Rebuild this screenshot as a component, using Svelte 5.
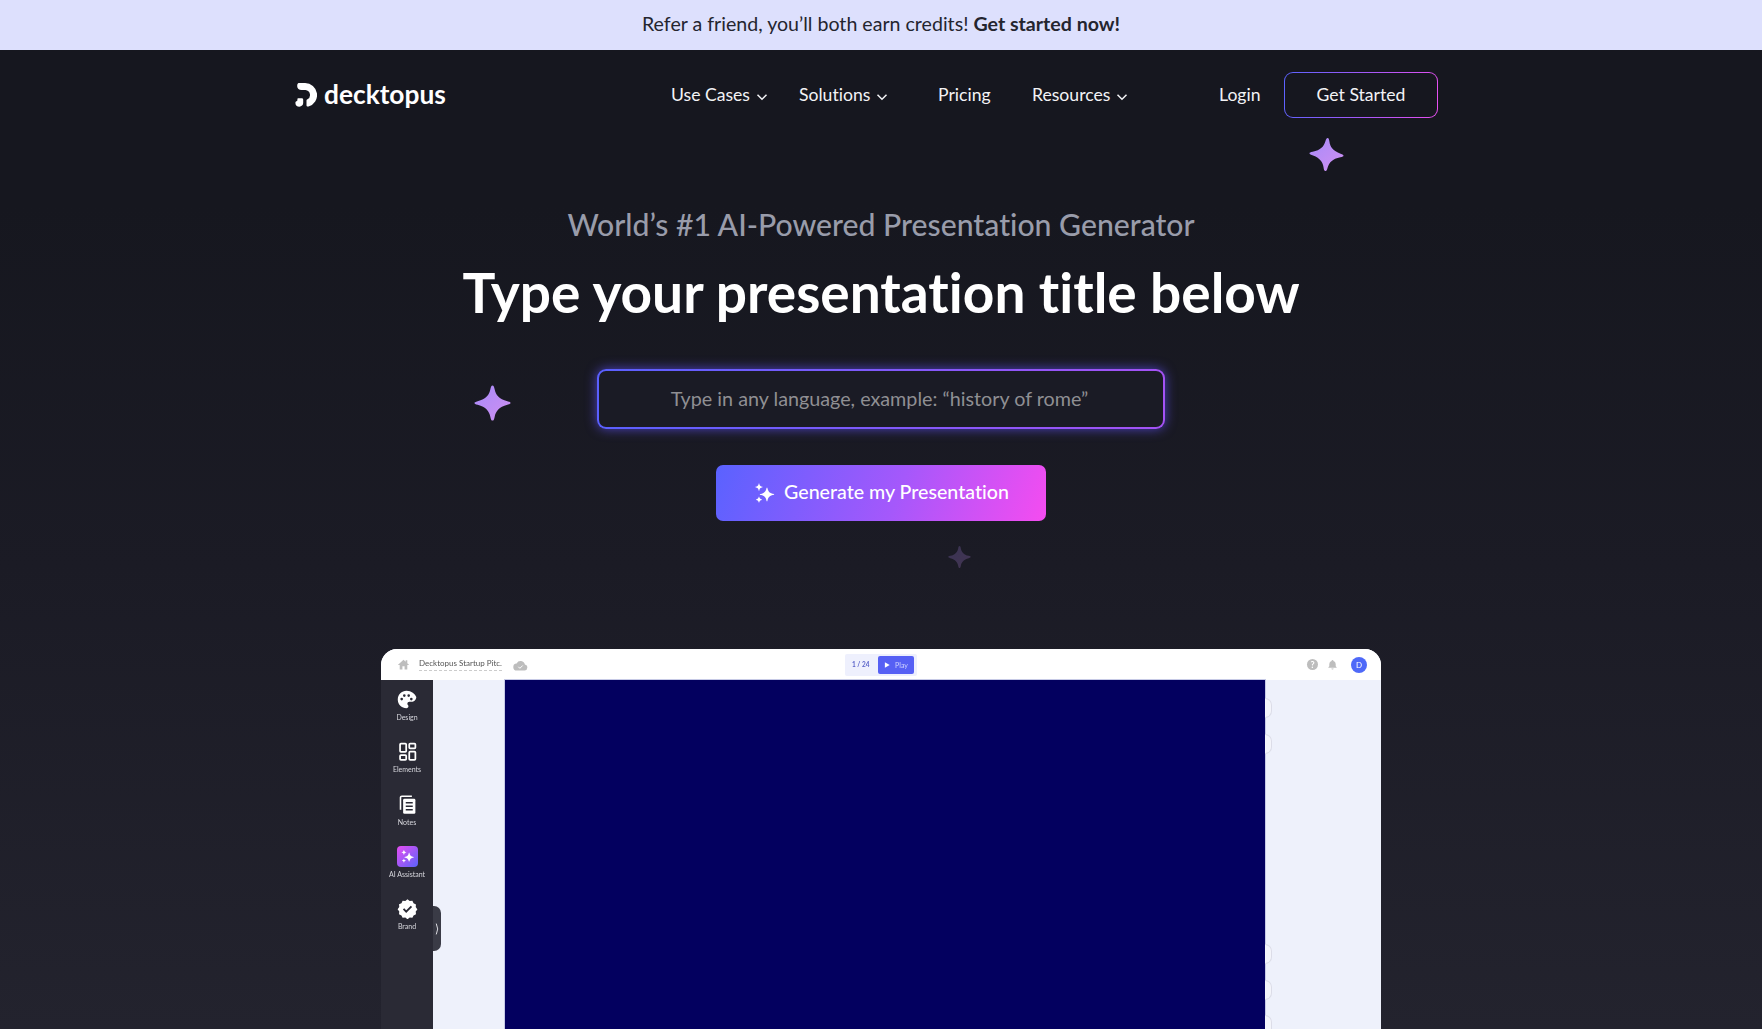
<script>
  const navItems = [
    { label: 'Use Cases', caret: true, cls: 'n1' },
    { label: 'Solutions', caret: true, cls: 'n2' },
    { label: 'Pricing', caret: false, cls: 'n3' },
    { label: 'Resources', caret: true, cls: 'n4' }
  ];
  const handles = [708, 744, 954, 990, 1025];
</script>

{#snippet star(cls)}
  <svg class={"star " + cls} viewBox="0 0 40 40" aria-hidden="true">
    <defs>
      <linearGradient id={"g" + cls} x1="0" y1="0" x2="1" y2="1">
        <stop offset="0" stop-color="#a78bfa" />
        <stop offset="1" stop-color="#d08ff0" />
      </linearGradient>
    </defs>
    <path fill={"url(#g" + cls + ")"} d="M20 1C21.200 1 21.800 2.500 22.300 5 23.500 11 27 15.500 36 18 38.500 18.700 39.500 19.200 39.500 20 39.500 20.800 38.500 21.300 36 22 27 24.500 23.500 29 22.300 35 21.800 37.500 21.200 39 20 39 18.800 39 18.200 37.500 17.700 35 16.500 29 13 24.500 4 22 1.500 21.300.5 20.800.5 20 .5 19.200 1.500 18.700 4 18 13 15.500 16.500 11 17.700 5 18.200 2.500 18.800 1 20 1z" />
  </svg>
{/snippet}

{#snippet sparkles(cls)}
  <svg class={cls} viewBox="0 0 24 24" aria-hidden="true">
    <path fill="#fff" d="M15 6c.8 4.300 2.400 5.800 7 6.600v.8c-4.600.8-6.200 2.300-7 6.600h-.8c-.8-4.300-2.400-5.800-7-6.600v-.8c4.600-.8 6.200-2.300 7-6.600zM6.500 1.500c.4 2.300 1.200 3 3.500 3.500v.6C7.700 6 6.900 6.800 6.500 9H6C5.600 6.800 4.800 6 2.500 5.600V5C4.800 4.500 5.600 3.800 6 1.500zM6.500 15.500c.3 1.800 1 2.400 2.800 2.800v.5c-1.800.4-2.500 1-2.800 2.700H6c-.3-1.700-1-2.300-2.800-2.700v-.5c1.800-.4 2.500-1 2.800-2.800z" />
  </svg>
{/snippet}

<div class="page">
  <div class="banner">
    <span>Refer a friend, you’ll both earn credits! <b>Get started now!</b></span>
  </div>

  <header class="nav">
    <div class="logo">
      <svg viewBox="0 0 22 24" class="logo-mark" aria-hidden="true">
        <path fill="#fff" d="M3.500 0H10a12 12 0 0 1 3.500 23.500c-1.200.4-2-.2-2-1.300v-4.400c0-.8.300-1.200 1-1.500A5 5 0 0 0 10.500 7H6.500C4 7 2.200 5.500 2.200 3.200 2.200 1.500 2.600.3 3.500 0z" />
        <path fill="#fff" d="M3.200 15.200h3.500c1 0 1.500.6 1.500 1.500v3.400c0 2-1.700 3.600-3.800 3.600A4 4 0 0 1 .4 19.900c0-1 .5-1.500 1-1.700.7-.3 1-.6 1-1.300 0-1 .1-1.700.8-1.700z" />
      </svg>
      <span>decktopus</span>
    </div>
    {#each navItems as item}
      <a class={"link " + item.cls} href="#top">
        {item.label}
        {#if item.caret}
          <svg class="caret" viewBox="0 0 12 8" aria-hidden="true"><path d="M1.500 1.800 6 6.200l4.500-4.400" /></svg>
        {/if}
      </a>
    {/each}
    <a class="link login" href="#top">Login</a>
    <a class="cta" href="#top"><span>Get Started</span></a>
  </header>

  <main class="hero">
    <p class="sub">World’s #1 AI-Powered Presentation Generator</p>
    <h1>Type your presentation title below</h1>
    <div class="input">Type in any language, example: “history of rome”</div>
    <button class="gen">
      {@render sparkles('gen-icon')}
      <span>Generate my Presentation</span>
    </button>
  </main>

  {@render star('s1')}
  {@render star('s2')}
  {@render star('s3')}

  <section class="frame">
    <div class="topbar">
      <div class="tb-left">
        <svg class="ic-home" viewBox="0 0 24 24" aria-hidden="true"><path fill="#bdbdbd" d="M12 3 1.500 13H5v8h5v-6h4v6h5v-8h3.500L19 9.700V4h-3v2.800z" /></svg>
        <span class="doc">Decktopus Startup Pitc.</span>
        <svg class="ic-cloud" viewBox="0 0 24 24" aria-hidden="true"><path fill="#bdbdbd" d="M19 10.500A7 7 0 0 0 5.800 8.600 5.500 5.500 0 0 0 6.500 20h12a4.800 4.800 0 0 0 .5-9.500z" /><path d="m8.500 14 2.500 2.500 4.500-4.500" stroke="#fff" stroke-width="1.600" fill="none" /></svg>
      </div>
      <div class="tb-mid">
        <span class="count">1 / 24</span>
        <span class="play"><svg viewBox="0 0 10 10" aria-hidden="true"><path fill="#fff" d="M1.500.5 9.500 5l-8 4.500z" /></svg>Play</span>
      </div>
      <div class="tb-right">
        <span class="help">?</span>
        <svg class="ic-bell" viewBox="0 0 24 24" aria-hidden="true"><path fill="#bdbdbd" d="M12 2a2 2 0 0 0-2 2v.6A7 7 0 0 0 5 11v5l-2 2v1h18v-1l-2-2v-5a7 7 0 0 0-5-6.400V4a2 2 0 0 0-2-2zM9.500 20.500a2.500 2.500 0 0 0 5 0z" /></svg>
        <span class="avatar">D</span>
      </div>
    </div>
    <div class="body">
      <aside class="side">
        <div class="tool">
          <svg viewBox="0 0 24 24" aria-hidden="true"><path fill="#fff" fill-rule="evenodd" d="M12 2C6.500 2 2 6.500 2 12s4.500 10 10 10c1.300 0 2.200-1 2.200-2.200 0-.6-.2-1.100-.6-1.500-.4-.4-.6-.9-.6-1.500 0-1.200 1-2.200 2.200-2.200h2.500c3 0 5.500-2.500 5.500-5.500C22 5.900 17.500 2 12 2zM6.500 13a1.500 1.500 0 1 1 0-3 1.500 1.500 0 0 1 0 3zm3-4a1.500 1.500 0 1 1 0-3 1.500 1.500 0 0 1 0 3zm5 0a1.500 1.500 0 1 1 0-3 1.500 1.500 0 0 1 0 3zm3 4a1.500 1.500 0 1 1 0-3 1.500 1.500 0 0 1 0 3z" /></svg>
          <span>Design</span>
        </div>
        <div class="tool">
          <svg viewBox="0 0 24 24" aria-hidden="true"><g fill="none" stroke="#fff" stroke-width="2"><rect x="3.500" y="3" width="7" height="9.500" rx="1" /><rect x="14" y="3" width="7" height="5.500" rx="1" /><rect x="3.500" y="16" width="7" height="5.500" rx="1" /><rect x="14" y="12" width="7" height="9.500" rx="1" /></g></svg>
          <span>Elements</span>
        </div>
        <div class="tool">
          <svg viewBox="0 0 24 24" aria-hidden="true"><path fill="none" stroke="#fff" stroke-width="1.800" d="M17 2.500H5.500a1.500 1.500 0 0 0-1.500 1.500v14" /><rect x="7" y="5.500" width="14" height="17" rx="1.500" fill="#fff" /><path d="M10 10h8M10 14h8M10 18h8" stroke="#2a2a35" stroke-width="1.800" /></svg>
          <span>Notes</span>
        </div>
        <div class="tool">
          <span class="ai">{@render sparkles('ai-icon')}</span>
          <span>AI Assistant</span>
        </div>
        <div class="tool">
          <svg viewBox="0 0 24 24" aria-hidden="true"><path fill="#fff" d="m12 1.500 2.500 1.900 3.100-.3 1.300 2.900 2.800 1.300-.3 3.100 1.900 2.600-1.900 2.500.3 3.100-2.800 1.300-1.300 2.800-3.100-.3-2.500 1.900-2.500-1.900-3.100.3-1.300-2.800-2.800-1.300.3-3.100L.7 12.900l1.900-2.600-.3-3.100 2.800-1.300 1.300-2.900 3.100.3z" /><path d="m7.500 12.500 3 3 6-6" fill="none" stroke="#2a2a35" stroke-width="2.200" /></svg>
          <span>Brand</span>
        </div>
        <div class="toggle"><svg viewBox="0 0 6 16" aria-hidden="true"><path d="M1.500 1.500Q5 8 1.500 14.500" fill="none" stroke="#e8e8ee" stroke-width="1.100" /></svg></div>
      </aside>
      <div class="canvas">
        <div class="slide">
          {#each handles as y}
            <i class="handle" style="top:{y - 680}px"></i>
          {/each}
        </div>
      </div>
    </div>
  </section>
</div>

<style>
  :global(body) { margin: 0; background: #161720; }
  .page {
    position: relative;
    width: 1762px;
    height: 1029px;
    overflow: hidden;
    display: flex;
    flex-direction: column;
    background: linear-gradient(180deg, #16171f 0%, #16171f 20%, #1b1b25 55%, #23232e 100%);
    font-family: "Lato", "Liberation Sans", sans-serif;
    font-variant-ligatures: none;
    color: #fff;
  }
  .banner {
    height: 50px;
    flex: none;
    box-sizing: border-box;
    padding-bottom: 4px;
    display: flex;
    align-items: center;
    justify-content: center;
    background: #dde0fd;
    color: #24252f;
    font-size: 19.600px;
  }
  .banner b { font-weight: 700; }
  .nav {
    height: 90px;
    flex: none;
    display: flex;
    align-items: center;
    padding-left: 294px;
  }
  .logo { display: flex; align-items: center; gap: 8px; width: 377px; font-size: 26.300px; font-weight: 700; }
  .logo span { padding-bottom: 3px; }
  .logo-mark { width: 22px; height: 24px; margin-left: 1px; margin-right: -1px; }
  .link { color: #f3f3f6; text-decoration: none; font-size: 17.600px; display: inline-flex; align-items: center; padding-bottom: 2px; }
  .n1 { width: 128px; }
  .n2 { width: 139px; }
  .n3 { width: 94px; }
  .n4 { width: 187px; }
  .login { width: 65px; }
  .caret { width: 12px; height: 8px; margin-left: 6px; margin-top: 6px; fill: none; stroke: #f3f3f6; stroke-width: 1.500; }
  .cta {
    width: 154px;
    height: 46px;
    box-sizing: border-box;
    display: flex;
    align-items: center;
    justify-content: center;
    padding-bottom: 2px;
    color: #f3f3f6;
    text-decoration: none;
    font-size: 17.600px;
    border: 1.500px solid transparent;
    border-radius: 9px;
    background:
      linear-gradient(#16171f, #16171f) padding-box,
      linear-gradient(100deg, #5b63ff, #e84ff0) border-box;
  }
  .hero { display: flex; flex-direction: column; align-items: center; flex: none; }
  .sub { margin: 65px 0 0; font-size: 30.200px; line-height: 38px; color: #999caa; font-weight: 500; }
  h1 { margin: 16px 0 0; font-size: 55px; line-height: 66px; font-weight: 700; color: #fff; }
  .input {
    margin-top: 44px;
    width: 568px;
    height: 60px;
    box-sizing: border-box;
    padding: 0 3px 1px 0;
    display: flex;
    align-items: center;
    justify-content: center;
    color: #8f8f93;
    font-size: 19.750px;
    border: 2px solid transparent;
    border-radius: 9px;
    background:
      linear-gradient(#1a1b25, #1a1b25) padding-box,
      linear-gradient(90deg, #5a60ff, #a452f5) border-box;
    box-shadow: 0 0 12px rgba(98, 82, 255, .7);
  }
  .gen {
    margin-top: 36px;
    width: 330px;
    height: 56px;
    box-sizing: border-box;
    padding: 0;
    display: flex;
    align-items: center;
    justify-content: center;
    gap: 8px;
    border: 0;
    border-radius: 7px;
    color: #fff;
    font: 500 19.600px "Lato", sans-serif;
    font-variant-ligatures: none;
    background: linear-gradient(110deg, #5a62ff 0%, #a558fb 55%, #f54cf0 100%);
  }
  .gen span { padding-bottom: 3px; }
  :global(.gen-icon) { width: 23px; height: 23px; }
  .star { position: absolute; }
  :global(.s1) { left: 1309px; top: 137px; width: 35px; height: 35px; transform: rotate(4deg); }
  :global(.s2) { left: 474px; top: 384px; width: 37px; height: 38px; }
  :global(.s3) { left: 948px; top: 545px; width: 23px; height: 24px; opacity: .22; }
  .frame {
    position: absolute;
    left: 381px;
    top: 649px;
    width: 1000px;
    height: 380px;
    border-radius: 16px 16px 0 0;
    overflow: hidden;
    background: #eef1fb;
    display: flex;
    flex-direction: column;
    color: #444;
    filter: blur(.35px);
  }
  .topbar {
    height: 31px;
    flex: none;
    display: grid;
    grid-template-columns: 1fr auto 1fr;
    align-items: center;
    background: #fff;
    padding: 0 14px;
    position: relative;
  }
  .tb-left { display: flex; align-items: center; margin-left: 2px; }
  .ic-home { width: 13px; height: 13px; margin-right: 9px; }
  .doc { font-size: 8px; color: #555; border-bottom: 1px dashed #ccc; padding-bottom: 2px; white-space: nowrap; }
  .ic-cloud { width: 15px; height: 15px; margin-left: 11px; margin-top: 2px; }
  .tb-mid {
    display: flex;
    align-items: center;
    width: 72px;
    height: 22px;
    box-sizing: border-box;
    padding: 0 3px 0 7px;
    background: #eef0fd;
    border-radius: 2px;
    justify-content: space-between;
  }
  .count { font-size: 6.500px; color: #5a63c9; font-weight: 700; }
  .play {
    width: 36px; height: 18px;
    background: #5660f4;
    border-radius: 2px;
    color: #cfd3ff;
    font-size: 7px;
    display: flex; align-items: center; justify-content: center; gap: 5px;
  }
  .play svg { width: 6px; height: 6px; }
  .tb-right { display: flex; align-items: center; justify-content: flex-end; gap: 9px; }
  .help {
    width: 11px; height: 11px; border-radius: 50%;
    background: #bdbdbd; color: #fff; font-size: 9px; font-weight: 700;
    display: flex; align-items: center; justify-content: center;
  }
  .ic-bell { width: 11px; height: 11px; margin-right: 4px; }
  .avatar {
    width: 16px; height: 16px; border-radius: 50%;
    background: #4e69f8; color: #fff; font-size: 8px;
    display: flex; align-items: center; justify-content: center;
  }
  .body { flex: 1; display: flex; min-height: 0; }
  .side {
    width: 52px;
    flex: none;
    background: #2a2a35;
    position: relative;
    display: flex;
    flex-direction: column;
    align-items: center;
    padding-top: 9px;
    box-sizing: border-box;
  }
  .tool {
    height: 52.300px;
    flex: none;
    display: flex;
    flex-direction: column;
    align-items: center;
    color: #d8d8de;
    font-size: 7px;
    white-space: nowrap;
    gap: 3px;
  }
  .tool svg { width: 21px; height: 21px; display: block; }
  .ai {
    width: 21px; height: 21px; border-radius: 4px;
    background: linear-gradient(135deg, #e64df2, #5a63fb);
    display: flex; align-items: center; justify-content: center;
  }
  .tool .ai :global(.ai-icon) { width: 15px; height: 15px; }
  .toggle {
    position: absolute;
    left: 52px;
    top: 226px;
    width: 8px;
    height: 45px;
    background: #3a3b46;
    border-radius: 0 7px 7px 0;
    display: flex; align-items: center; justify-content: center;
  }
  .toggle svg { width: 5px; height: 14px; }
  .canvas { flex: 1; position: relative; padding-left: 72px; padding-right: 116px; }
  .slide {
    height: 100%;
    background: #03005f;
    position: relative;
    box-shadow: 0 0 0 1px #c7cae6;
  }
  .handle {
    position: absolute;
    right: -7px;
    margin-top: -10px;
    width: 7px;
    height: 20px;
    box-sizing: border-box;
    background: #f4f5fb;
    border: 1px solid #dcdde8;
    border-left: 0;
    border-radius: 0 10px 10px 0;
  }
</style>
